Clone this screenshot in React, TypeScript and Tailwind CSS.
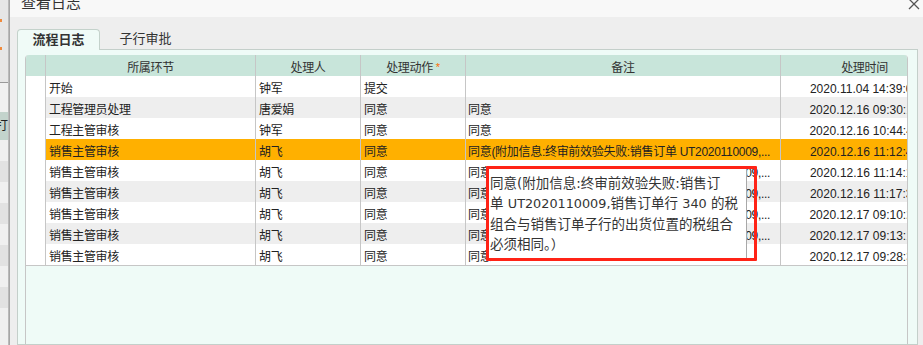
import React from "react";

const LONG = "同意(附加信息:终审前效验失败:销售订单 UT2020110009,...";

const rows = [
  { node: "开始", user: "钟军", action: "提交", note: "", time: "2020.11.04 14:39:05" },
  { node: "工程管理员处理", user: "唐爱娟", action: "同意", note: "同意", time: "2020.12.16 09:30:12" },
  { node: "工程主管审核", user: "钟军", action: "同意", note: "同意", time: "2020.12.16 10:44:41" },
  { node: "销售主管审核", user: "胡飞", action: "同意", note: LONG, time: "2020.12.16 11:12:45", active: true },
  { node: "销售主管审核", user: "胡飞", action: "同意", note: LONG, time: "2020.12.16 11:14:16" },
  { node: "销售主管审核", user: "胡飞", action: "同意", note: LONG, time: "2020.12.16 11:17:33" },
  { node: "销售主管审核", user: "胡飞", action: "同意", note: LONG, time: "2020.12.17 09:10:22" },
  { node: "销售主管审核", user: "胡飞", action: "同意", note: LONG, time: "2020.12.17 09:13:18" },
  { node: "销售主管审核", user: "胡飞", action: "同意", note: "同意", time: "2020.12.17 09:28:36" },
];

const BackPage = () => {
  return (
    <div className="w-[8px] shrink-0 flex flex-col bg-[#e6e6e6]">
      <div className="h-[83px] border-b border-[#9a9a9a] relative">
        <div className="absolute left-0 top-[19px] w-[2px] h-[3px] bg-[#f08a3c]" />
        <div className="absolute left-0 top-[47px] w-[2px] h-[3px] bg-[#f08a3c]" />
      </div>
      <div className="h-[29px] bg-[#f1f1f1]" />
      <div className="h-[28px] bg-[#c3d3cc] flex items-center text-[12px] text-[#222] leading-none overflow-hidden whitespace-nowrap">
        <span className="-ml-[4px]">打E</span>
      </div>
      <div className="h-[21px] bg-[#f0f0f0]" />
      <div className="h-[21px] bg-[#e2e2e2]" />
      <div className="h-[21px] bg-[#f0f0f0]" />
      <div className="h-[21px] bg-[#e2e2e2]" />
      <div className="h-[21px] bg-[#f0f0f0]" />
      <div className="h-[21px] bg-[#e2e2e2]" />
      <div className="h-[21px] bg-[#f0f0f0]" />
      <div className="h-[21px] bg-[#e2e2e2]" />
      <div className="flex-1 bg-[#f0f0f0]" />
    </div>
  );
};

const Cell = ({ w, children, className = "" }: { w: string; children?: React.ReactNode; className?: string }) => {
  return (
    <div className={`${w} shrink-0 h-full pt-[4px] border-r border-[#c6c6c6] flex items-center overflow-hidden whitespace-nowrap ${className}`}>
      {children}
    </div>
  );
};

export default function App() {
  return (
    <div className="relative w-[923px] h-[345px] overflow-hidden flex bg-[#e6e6e6] font-['Liberation_Sans','Noto_Sans_CJK_SC',sans-serif]">
      <BackPage />
      <div className="w-[2px] shrink-0 bg-gradient-to-r from-[#c4c4c4] to-[#9c9c9c]" />

      {/* dialog */}
      <div className="flex-1 flex flex-col bg-[#eeeeee] min-w-0">
        <div className="h-[17px] shrink-0 bg-[#f8f8f8] flex justify-between overflow-hidden">
          <div className="ml-[11px] -mt-[5px] text-[15px] leading-[15px] text-[#333]">查看日志</div>
          <svg width="12" height="12" viewBox="0 0 12 12" className="-mt-[2px] mr-[3px]">
            <path d="M1 1 L11 11 M11 1 L1 11" stroke="#555" strokeWidth="1.3" fill="none" />
          </svg>
        </div>

        <div className="flex-1 flex flex-col pl-[7px] pr-[5px] pt-[12px]">
          {/* tabs */}
          <div className="flex h-[20px] shrink-0">
            <div className="relative z-10 w-[83px] h-[21px] bg-[#f0fbf7] border border-b-0 border-[#c4d2cb] rounded-t-[4px] flex items-center justify-center text-[13px] font-bold text-[#333]">
              流程日志
            </div>
            <div className="w-[83px] ml-[4px] flex items-center justify-center text-[13px] text-[#333]">子行审批</div>
          </div>

          {/* panel */}
          <div className="flex-1 bg-[#effbf7] border border-[#c4cfca] pt-[5px] pl-[7px]">
            <div className="w-[883px] h-full overflow-hidden border-l border-r border-[#c6c6c6] rounded-t-[4px] flex flex-col text-[12px] text-[#222]">
              <div className="h-[21px] shrink-0 flex bg-[#c8e5da] text-[#333] tracking-[-0.35px]">
                <Cell w="w-[20px]" />
                <Cell w="w-[210px]" className="justify-center">所属环节</Cell>
                <Cell w="w-[105px]" className="justify-center">处理人</Cell>
                <Cell w="w-[105px]" className="justify-center">
                  处理动作<span className="ml-[3px] text-[#ff6a00] text-[11px]">*</span>
                </Cell>
                <Cell w="w-[315px]" className="justify-center">备注</Cell>
                <Cell w="w-[168px]" className="justify-center">处理时间</Cell>
              </div>
              {rows.map((r, i) => (
                <div
                  key={i}
                  className={`h-[21px] shrink-0 flex ${r.active ? "bg-[#ffb000]" : i % 2 === 1 ? "bg-[#eeeeee]" : "bg-white"}`}
                >
                  <Cell w="w-[20px]" className="bg-white" />
                  <Cell w="w-[210px]" className="pl-[3px] tracking-[-0.35px]">{r.node}</Cell>
                  <Cell w="w-[105px]" className="pl-[3px] tracking-[-0.35px]">{r.user}</Cell>
                  <Cell w="w-[105px]" className="pl-[3px] tracking-[-0.35px]">{r.action}</Cell>
                  <Cell w="w-[315px]" className="pl-[2px] tracking-[-0.3px]">{r.note}</Cell>
                  <Cell w="w-[168px]" className="justify-center">{r.time}</Cell>
                </div>
              ))}
              <div className="flex-1 border-t border-[#c6c6c6] bg-[#effbf7]" />
            </div>
          </div>
        </div>
      </div>

      {/* tooltip */}
      <div className="absolute left-[487px] top-[167px] w-[260px] h-[92px] bg-white border border-[#a8a8a8] pl-[2px] pt-[5px] text-[13.5px] leading-[20px] text-[#333] whitespace-nowrap font-['DejaVu_Sans','Noto_Sans_CJK_SC',sans-serif]">
        <div>同意(附加信息:终审前效验失败:销售订</div>
        <div>
          单 <span className="text-[12.8px]">UT2020110009,</span>销售订单行 <span className="text-[12.8px]">340</span> 的税
        </div>
        <div>组合与销售订单子行的出货位置的税组合</div>
        <div>必须相同。）</div>
      </div>
      {/* red annotation frame */}
      <div className="absolute left-[486px] top-[166px] w-[271px] h-[95px] border-[3px] border-[#ff2316] rounded-[1px]" />
    </div>
  );
}
